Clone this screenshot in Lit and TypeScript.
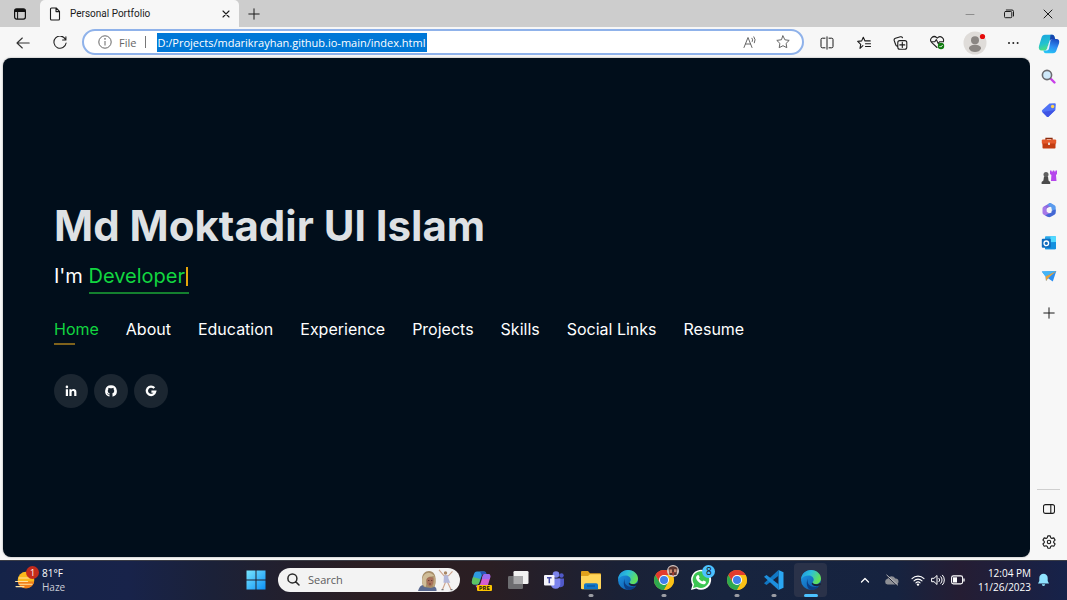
import { LitElement, html, css, svg, type TemplateResult, type SVGTemplateResult } from "lit";
import { customElement, property } from "lit/decorators.js";

const glyph = (w: number, h: number, body: SVGTemplateResult): TemplateResult =>
  html`<svg width=${w} height=${h} viewBox="0 0 ${w} ${h}" aria-hidden="true">${body}</svg>`;

const line = (w: number, h: number, d: string, width = 1, stroke = "#1b1b1b"): TemplateResult =>
  glyph(w, h, svg`<path d=${d} fill="none" stroke=${stroke} stroke-width=${width} stroke-linecap="round" stroke-linejoin="round"/>`);

const icons = {
  tabMenu: glyph(12, 12, svg`<rect x=".6" y=".9" width="10.8" height="10.2" rx="2" fill="none" stroke="#111" stroke-width="1.2"/><path d="M.6 4V2.9a2 2 0 0 1 2-2h6.8a2 2 0 0 1 2 2V4Z" fill="#111"/><path d="M3.6 4v7" stroke="#111"/>`),
  file: line(12, 14, "M2.5 1h4.7L10.5 4.4v7.6a1 1 0 0 1-1 1h-7a1 1 0 0 1-1-1V2a1 1 0 0 1 1-1ZM7 1v3.6h3.5", 1.1),
  close: line(8, 8, "M1 1l6 6M7 1L1 7", 1.1),
  plus: line(12, 12, "M6 .8v10.4M.8 6h10.4"),
  minimize: line(10, 10, "M1 5.5h8", 1, "#8d8d8d"),
  restore: line(10, 10, "M1.5 2.5h5.3a1 1 0 0 1 1 1v4.2a1 1 0 0 1-1 1H1.500a1 1 0 0 1-1-1V3.500a1 1 0 0 1 1-1ZM2.300 1h5.700a1.500 1.500 0 0 1 1.500 1.500v4.500"),
  winClose: line(10, 10, "M1 1l8 8M9 1L1 9"),
  back: line(14, 12, "M13.2 6H1M6.300 1L1 6l5.300 5", 1.1, "#333"),
  reload: line(14, 14, "M12.400 3.200A6.100 6.100 0 1 0 13.100 7M12.900.8v3.200H9.600", 1.1, "#222"),
  info: glyph(14, 14, svg`<circle cx="7" cy="7" r="6.2" fill="none" stroke="#666"/><path d="M7 6v4.500" stroke="#666"/><circle cx="7" cy="3.900" r=".8" fill="#666"/>`),
  readAloud: line(14, 14, "M1 12.500L5 2.500l4 10M2.400 9h5.200M9 3.200a3 3 0 0 1 .3 3.300M10.900 1.800a5.400 5.400 0 0 1 .5 6", 1, "#666"),
  star: line(14, 14, "M7 .9l1.900 3.900 4.300.6-3.100 3 .7 4.300L7 10.700l-3.800 2 .7-4.300-3.100-3 4.300-.6Z", 1, "#666"),
  split: line(14, 14, "M5 2.200H2.300A1.300 1.300 0 0 0 1 3.500v7a1.300 1.300 0 0 0 1.300 1.300H5M9 2.200h2.700A1.300 1.300 0 0 1 13 3.500v7a1.300 1.300 0 0 1-1.300 1.300H9M7 .8v12.400"),
  favorites: line(14, 14, "M5.900 9.600L3 12.300l.7-4L.7 5.400l4-.5 1.600-3.600 1.700 3.600h5.200M8.500 7.700h5M8.500 10.500h5", 1.1),
  collections: line(15, 14, "M4.600 10.500A2.800 2.800 0 0 1 2.500 8.200L1.200 4.500a1.800 1.800 0 0 1 1.200-2.200l5-1.500a1.800 1.800 0 0 1 2.100 1M6.800 4.600h5a2 2 0 0 1 2 2v4.600a2 2 0 0 1-2 2h-5a2 2 0 0 1-2-2V6.600a2 2 0 0 1 2-2ZM9.300 6.400v5M6.800 8.900h5", 1.1),
  health: glyph(15, 15, svg`<path d="M7 12.500L1.800 7.600A3.500 3.500 0 0 1 6.700 2.600l.5.600.6-.6a3.500 3.500 0 0 1 5.500 4M1.800 6.800h3L6.300 4.600l2 4.200 1.200-2h4" fill="none" stroke="#222" stroke-width="1.100" stroke-linecap="round" stroke-linejoin="round"/><circle cx="11" cy="11" r="3.200" fill="#107c10"/><path d="M9.500 11l1.100 1.100 2-2" stroke="#fff" fill="none"/>`),
  avatar: glyph(24, 24, svg`<circle cx="12" cy="12" r="11.500" fill="#dfdcd9"/><circle cx="12" cy="9.300" r="4" fill="#8a8683"/><path d="M6 17.500c0-5 12-5 12 0-1.500 4.700-10.500 4.700-12 0Z" fill="#8a8683"/><circle cx="19.500" cy="5.500" r="2.600" fill="#e60b0b"/>`),
  more: glyph(14, 6, svg`<g fill="#222"><circle cx="4" cy="3" r="1"/><circle cx="8.300" cy="3" r="1"/><circle cx="12.600" cy="3" r="1"/></g>`),
  search: glyph(16, 16, svg`<path d="M9.500 9.500l4 4" stroke="#c83ee8" stroke-width="2.400" stroke-linecap="round"/><circle cx="6" cy="6" r="4.600" fill="#cfe9fa" stroke="#6b6b6f" stroke-width="1.600"/>`),
  shopping: glyph(16, 16, svg`<path d="M8.500 1.500l5-.3a1.200 1.200 0 0 1 1.300 1.300l-.4 5.500-6.700 6.500a1.400 1.400 0 0 1-2 0L1.300 10a1.400 1.400 0 0 1 0-2Z" fill="#4f72f5"/><path d="M1.300 10L14.400 8l-6.700 6.500a1.400 1.400 0 0 1-2 0Z" fill="#3f55e4"/><circle cx="11.600" cy="4.500" r="1.700" fill="#ffd34e"/>`),
  tools: glyph(16, 16, svg`<path d="M5 5V3.300h6V5" fill="none" stroke="#8b2b0d" stroke-width="1.300"/><rect x=".8" y="4.500" width="14.400" height="4.500" rx="1" fill="#e4592b"/><rect x="1.500" y="8.500" width="13" height="5" rx=".8" fill="#c33d12"/><rect x="7" y="7.500" width="2" height="2.400" rx=".5" fill="#e9d9d0"/>`),
  games: glyph(16, 16, svg`<path d="M9 1.500h1.500v1h1.300v-1h1.500v1h1.200v-1H16V5l-1 1 .5 6H10L10.400 6 9 5Z" fill="#b646ec"/><circle cx="5" cy="5.500" r="2.500" fill="#626262"/><path d="M3 7.500h4l.5 4 1.700 1.500v2H.6v-2l1.800-1.500Z" fill="#4c4c4c"/>`),
  office: glyph(16, 16, svg`<path d="M9 .9L3.200 4.200A2.500 2.500 0 0 0 2 6.400v4.200l4-1.300V6.500l4.200-2.600 3.800 2-.3-1.900Z" fill="#8a6be0"/><path d="M7.800 1.500c1-.6 1.900-.6 2.700-.1l3 1.800c.9.500 1.200 1.200 1.200 2.200v4.300l-4.200-2V5.500L6.500 3Z" fill="#5b9cee"/><path d="M1.500 6.400v4.200c0 1 .4 1.700 1.300 2.200l3.500 2 4.200-2.300-4.800-2.700V6l-2-1.800C2 4.800 1.500 5.400 1.500 6.400Z" fill="#a678e8"/><path d="M14.700 7.500v3c0 1-.4 1.700-1.300 2.200l-3.600 2c-1 .6-2 .6-3 .1l-2.600-1.500 6.300-2.800V8.500Z" fill="#4468d4"/><circle cx="8" cy="8" r="2.500" fill="#f7f7f7"/>`),
  outlook: glyph(16, 16, svg`<rect x="4" y="1.200" width="11" height="13" rx="1" fill="#28a8ea"/><path d="M9.500 1.200H14a1 1 0 0 1 1 1V7H9.500Z" fill="#50d9ff"/><path d="M4 8l11-1v6.200a1 1 0 0 1-1 1H4Z" fill="#1490df"/><rect x=".8" y="3.800" width="9" height="9" rx="1" fill="#0f6cbd"/><circle cx="5.300" cy="8.300" r="2.300" fill="none" stroke="#fff" stroke-width="1.300"/>`),
  drop: glyph(16, 16, svg`<path d="M.8 3.500L15.300 3 11.800 13.500 7 10.300 5 13 4.600 8.500Z" fill="#2d8ff0"/><path d="M.8 3.500L15.300 3 4.600 8.500Z" fill="#45b5f5"/><path d="M4.600 8.500L15.300 3 7 10.300 5 13Z" fill="#e8a33a"/>`),
  panel: line(12, 10, "M2.500.6h7a2 2 0 0 1 2 2v4.800a2 2 0 0 1-2 2h-7a2 2 0 0 1-2-2V2.600a2 2 0 0 1 2-2ZM7.800.8v8.400", 1.1),
  gear: line(14, 14, "M5.800.9h2.400l.5 1.800 1.200.7 1.900-.5 1.300 2.200-1.400 1.300v1.300l1.400 1.300-1.300 2.200-1.900-.5-1.200.7-.5 1.800H5.800l-.5-1.800-1.200-.7-1.900.5L.9 9l1.400-1.300V6.400L.9 5.100l1.300-2.200 1.900.5 1.200-.7ZM8.700 7a1.700 1.700 0 1 1-3.400 0 1.700 1.700 0 0 1 3.400 0Z", 1.1),
  copilot: glyph(22, 20, svg`<defs><linearGradient id="a" x1="0" y1="0" x2=".3" y2="1"><stop stop-color="#1aa3e0"/><stop offset=".6" stop-color="#22c2d0"/><stop offset="1" stop-color="#4ee07c"/></linearGradient><linearGradient id="b" x1=".6" y1="0" x2=".3" y2="1"><stop stop-color="#1b4fc4"/><stop offset=".5" stop-color="#2e8cf2"/><stop offset="1" stop-color="#25c7f6"/></linearGradient></defs><path d="M7 .8h7.200c1.500 0 2 1 2.500 2.700L17.200 5h-2.700c-1.800 0-2.600.8-3.100 2.400L9.200 14c-.6 1.800-1.400 2.600-3 2.600H3.600c-2.400 0-3.300-2-2.600-4.600L3.400 4C4.100 1.800 5.200.8 7 .8Z" fill="url(#a)"/><path d="M15 19.200H7.800c-1.500 0-2-1-2.500-2.600h1c1.600 0 2.400-.8 3-2.600l2.100-6.600C11.900 5.800 12.700 5 14.500 5h4c2.400 0 3.200 2 2.500 4.500L18.600 16c-.7 2.200-1.800 3.200-3.600 3.200Z" fill="url(#b)"/><path d="M9.300 14l2.100-6.600c.3-1 .7-1.600 1.300-2L11 14.600c-.4 1.300-1 2-2.200 2H6.200c1.700 0 2.500-.8 3.100-2.600Z" fill="#e9f6fb"/><path d="M12.500.8h1.700c1.500 0 2 1 2.500 2.700L17.200 5h-2.700c-1.200 0-2 .4-2.600 1.200Z" fill="#1745ae"/>`),
  linkedin: glyph(12, 12, svg`<g fill="#fff"><circle cx="1.900" cy="1.900" r="1.300"/><path d="M.8 4.200h2.200V11H.8ZM4.400 4.200h2.100v1c1-1.700 4.900-1.700 4.900 1.800v4H9.200V7.400c0-2-2.600-1.900-2.600 0V11H4.400Z"/></g>`),
  github: glyph(12, 12, svg`<path fill="#fff" fill-rule="evenodd" d="M6 .3a5.800 5.800 0 0 0-1.900 11.300c.3 0 .4-.1.400-.3V9.800C3 10.100 2.600 9.100 2.600 9.100c-.3-.6-.6-.8-.6-.8.6-.1 1.200.7 1.200.7.400.6 1 .5 1.400.3l.3-.8C3.400 8.300 2.800 7.300 2.800 5.800c0-.7.200-1.200.6-1.600-.1-.5-.1-1 .1-1.500.5 0 1 .3 1.500.6a5.500 5.500 0 0 1 2 0c.5-.3 1-.6 1.500-.6.2.5.2 1 .1 1.500.4.400.6 1 .6 1.600 0 1.500-.7 2.500-2.100 2.700.3.300.4.700.4 1.200v1.600c0 .2.100.4.400.3A5.800 5.800 0 0 0 6 .3Z"/>`),
  google: glyph(12, 12, svg`<path d="M9.300 3.100A4.200 4.200 0 1 0 10.200 6.600H6.400" fill="none" stroke="#fff" stroke-width="2.300"/>`),
};

const edge = glyph(22, 22, svg`<defs><linearGradient id="e1" x1="0" y1="0" x2="1" y2=".4"><stop stop-color="#1f8fe0"/><stop offset=".5" stop-color="#2cc0d8"/><stop offset="1" stop-color="#62e05a"/></linearGradient><linearGradient id="e2" x1="0" y1="0" x2="1" y2="1"><stop stop-color="#1e9ae8"/><stop offset="1" stop-color="#0c4fa0"/></linearGradient></defs><circle cx="11" cy="11" r="10" fill="url(#e2)"/><path d="M1 10.500C1.500 4.500 6 1 11 1c6 0 10 4.200 10 8.500 0 3.500-2.500 5.500-5.200 5.500-2 0-3.300-.8-3.300-1.600 0-.7 1.200-1 1.200-2.900 0-2.200-2.200-4-5.200-4-3.200 0-6 1.500-7.500 4Z" fill="url(#e1)"/><path d="M8 9.500c-1.500 4 1 8.800 7.500 8.500 1.500 0 3-.4 4-1.200A10 10 0 0 1 11 21C7 20 5.500 14 8 9.500Z" fill="#0b3f86"/><path d="M12.500 13.400c0 1.400 4.500 3 7.800.300l.8 1.500c-1 1.300-3.500 2.300-6.100 1.800-3-.6-4-3-2.500-3.600Z" fill="#1a2238"/>`);

const chromeBody = svg`<circle cx="11" cy="11" r="10" fill="#fbc116"/><path d="M2.340 6A10 10 0 0 1 19.660 6H11L6.670 13.500Z" fill="#e33b2e"/><path d="M2.340 6A10 10 0 0 0 11 21L15.330 13.500H6.670Z" fill="#2da94f"/><path d="M19.660 6A10 10 0 0 1 11 21L15.330 13.500 11 6Z" fill="#fbc116"/><circle cx="11" cy="11" r="5" fill="#fff"/><circle cx="11" cy="11" r="4" fill="#3f7fea"/>`;

const apps: { name: string; art: TemplateResult; running?: boolean; active?: boolean; badge?: string }[] = [
  { name: "Copilot", art: html`${glyph(22, 20, svg`<path d="M7 1.500h7c1.500 0 2 .7 2.400 2.300h-2c-1.700 0-2.300.8-2.800 2.400L9.500 12c-.6 1.800-1.400 2.600-3 2.600H4.200c-2 0-2.800-1.600-2.200-4L3.800 4.500C4.400 2.500 5.300 1.500 7 1.500Z" fill="#2e9be0"/><path d="M2 10.500L3 7l7.300 2-1 3c-.6 1.800-1.200 2.600-2.800 2.600H4.200c-2 0-2.800-1.600-2.200-4.100Z" fill="#5cc264"/><path d="M10 1.500h4c1.500 0 2 .7 2.400 2.300h-2c-1.300 0-2 .5-2.500 1.600Z" fill="#2653b8"/><path d="M14.500 18H8c-1.300 0-2-.8-2.400-2.400h1.800c1.600 0 2.600-.8 3.200-2.600l2-6.600c.5-1.600 1-2.400 2.400-2.400H18c2 0 2.800 1.600 2.100 4L18 15c-.6 2-1.700 3-3.500 3Z" fill="#d55fd0"/><path d="M15 3.900h3c2 0 2.800 1.600 2.100 4L19.500 9h-7.700l.8-2.700C13 4.600 13.500 3.900 15 3.900Z" fill="#9a6cf0"/>`)}<span class="pre">PRE</span>` },
  { name: "Task view", art: glyph(22, 20, svg`<rect x="6.500" y="1" width="15" height="13" rx="1.300" fill="#f2f2f2"/><rect x="1" y="6" width="15" height="13" rx="1.300" fill="#6d6d70"/><path d="M6.500 6H16v8H6.500Z" fill="#a9a9ab"/>`) },
  { name: "Teams", art: glyph(22, 20, svg`<circle cx="13" cy="4.500" r="3.300" fill="#7b83eb"/><circle cx="18.500" cy="5.500" r="2.200" fill="#5059c9"/><path d="M15 8.500h6v5.500a3.300 3.300 0 0 1-5 2.800Z" fill="#5059c9"/><path d="M8 8.500h9.300v6A4.700 4.700 0 0 1 8 15Z" fill="#7b83eb"/><rect x="1" y="5" width="10.500" height="10.500" rx="1" fill="#f4f4fa"/><path d="M4 7.800h4.600M6.300 7.800v5.400" stroke="#444ba8" stroke-width="1.500"/>`) },
  { name: "File Explorer", running: true, art: glyph(22, 20, svg`<path d="M1 2a1 1 0 0 1 1-1h6l2 2.300H20a1 1 0 0 1 1 1V8H1Z" fill="#e0a11c"/><path d="M1 6h7l2-1.700h10a1 1 0 0 1 1 1V18a1.200 1.200 0 0 1-1.200 1.200H2.200A1.200 1.200 0 0 1 1 18Z" fill="#ffd55a"/><path d="M4 19.200V15a1.800 1.800 0 0 1 1.800-1.800h10.400A1.800 1.800 0 0 1 18 15v4.200Z" fill="#1276c8"/><path d="M7 16h8" stroke="#0b559b" stroke-width="1.300"/>`) },
  { name: "Microsoft Edge", art: edge },
  { name: "Chrome profile", running: true, badge: "face", art: glyph(22, 22, chromeBody) },
  { name: "WhatsApp", badge: "8", art: glyph(22, 22, svg`<path d="M1 21l1.500-5.200A10 10 0 1 1 6.300 19.500Z" fill="#fff"/><path d="M3 19l1.100-3.700A8.300 8.300 0 1 1 7 17.900Z" fill="#3cc653"/><path d="M7.500 6.200c.7-.5 1.200-.2 1.500.5l.6 1.500c.1.500-.8 1.100-.7 1.400a6 6 0 0 0 3.300 2.900c.4.100 1-1.200 1.500-1l2 1c.5.300.2 1.600-.5 2.200-1.800 1.500-5-.2-6.800-2-2.200-2.200-3.500-4.700-.9-6.500Z" fill="#fff"/>`) },
  { name: "Google Chrome", running: true, art: glyph(22, 22, chromeBody) },
  { name: "Visual Studio Code", running: true, art: glyph(22, 22, svg`<path d="M15.500 1l5 2.300v15.400l-5 2.300Z" fill="#2aa6f2"/><path d="M15.500 1v5.700L3.500 16 1 14.200Z" fill="#1177c4"/><path d="M15.500 21v-5.700L3.500 6 1 7.800Z" fill="#1d8fdd"/>`) },
  { name: "Microsoft Edge window", active: true, art: edge },
];

@customElement("icon-button")
class IconButton extends LitElement {
  static styles = css`
    :host { display: grid; }
    button { display: grid; place-items: center; border: 0; padding: 0; margin: 0; background: none; width: 100%; height: 100%; }
    svg { display: block; }
  `;
  @property() label = "";
  @property({ attribute: false }) art?: TemplateResult;
  render() {
    return html`<button aria-label=${this.label} title=${this.label}>${this.art}</button>`;
  }
}

const btn = (label: string, art: TemplateResult) => html`<icon-button .label=${label} .art=${art}></icon-button>`;

@customElement("browser-tabs")
class BrowserTabs extends LitElement {
  static styles = css`
    :host { display: flex; height: 27px; background: #cdcdcd; font: 10px/14px Roboto, "Open Sans", sans-serif; color: #1b1b1b; }
    .menu { width: 40px; }
    .tab { display: flex; align-items: center; width: 199px; box-sizing: border-box; padding: 0 3px 0 9px; background: #f7f7f7; border-radius: 5px 5px 0 0; }
    .tab svg { display: block; }
    .title { flex: 1; padding-left: 9px; white-space: nowrap; }
    .close { width: 20px; height: 20px; }
    .add { width: 30px; }
    .space { flex: 1; }
    .win { display: grid; grid-template-columns: repeat(3, 39px); }
  `;
  render() {
    return html`
      <icon-button class="menu" .label=${"Tab actions"} .art=${icons.tabMenu}></icon-button>
      <div class="tab">${icons.file}<span class="title">Personal Portfolio</span>
        <icon-button class="close" .label=${"Close tab"} .art=${icons.close}></icon-button></div>
      <icon-button class="add" .label=${"New tab"} .art=${icons.plus}></icon-button>
      <span class="space"></span>
      <div class="win">${btn("Minimize", icons.minimize)}${btn("Restore", icons.restore)}${btn("Close", icons.winClose)}</div>`;
  }
}

@customElement("browser-toolbar")
class BrowserToolbar extends LitElement {
  static styles = css`
    :host { display: flex; gap: 4px; height: 31px; padding-left: 4px; background: #f7f7f7; font: 11px/19px "Open Sans", "Noto Sans", sans-serif; }
    .nav, .actions { display: grid; grid-auto-flow: column; grid-auto-columns: 37px; }
    .box { flex: 1; display: flex; align-items: center; box-sizing: border-box; margin: 2px 0 3px; border: 2px solid #8fb2ea; border-radius: 13px; background: #fff; padding: 0 3px 0 14px; }
    .box svg { display: block; }
    label { color: #666; padding: 0 9px 0 7px; }
    .bar { width: 1px; height: 12px; background: #777; margin-right: 11px; }
    input { width: 270px; border: 0; padding: 0; margin: 0; height: 19px; background: #0078d7; color: #fff; font: inherit; outline: 0; }
    .space { flex: 1; }
    .inner { width: 33px; }
  `;
  render() {
    return html`
      <div class="nav">${btn("Back", icons.back)}${btn("Refresh", icons.reload)}</div>
      <div class="box">${icons.info}<label for="url">File</label><span class="bar"></span>
        <input id="url" type="text" .value=${"D:/Projects/mdarikrayhan.github.io-main/index.html"}>
        <span class="space"></span>
        <icon-button class="inner" .label=${"Read aloud"} .art=${icons.readAloud}></icon-button>
        <icon-button class="inner" .label=${"Add to favorites"} .art=${icons.star}></icon-button>
      </div>
      <div class="actions">
        ${btn("Split screen", icons.split)}${btn("Favorites", icons.favorites)}${btn("Collections", icons.collections)}
        ${btn("Browser essentials", icons.health)}${btn("Profile", icons.avatar)}${btn("Settings and more", icons.more)}
      </div>`;
  }
}

@customElement("edge-sidebar")
class EdgeSidebar extends LitElement {
  static styles = css`
    :host { display: flex; flex-direction: column; padding-bottom: 2px; background: #f7f7f7; }
    .apps { display: grid; grid-template-rows: repeat(8, 1fr); height: 266px; }
    .row { height: 33px; flex: none; }
    .add { margin-top: 3px; }
    .space { flex: 1; }
    .rule { border: 0; height: 1px; background: #cfcfcf; margin: 0 7px 2px; width: 23px; }
  `;
  render() {
    return html`
      <div class="apps">
        ${btn("Copilot", icons.copilot)}${btn("Search", icons.search)}${btn("Shopping", icons.shopping)}${btn("Tools", icons.tools)}
        ${btn("Games", icons.games)}${btn("Microsoft 365", icons.office)}${btn("Outlook", icons.outlook)}${btn("Drop", icons.drop)}
      </div>
      <icon-button class="row add" .label=${"Customize"} .art=${icons.plus}></icon-button>
      <span class="space"></span>
      <hr class="rule">
      <icon-button class="row" .label=${"Hide sidebar"} .art=${icons.panel}></icon-button>
      <icon-button class="row" .label=${"Settings"} .art=${icons.gear}></icon-button>`;
  }
}

@customElement("portfolio-page")
class PortfolioPage extends LitElement {
  static styles = css`
    :host { display: flex; flex-direction: column; justify-content: center; align-items: flex-start; padding: 0 51px 5px; background: #010e1b; border-radius: 8px; color: #fff; font-family: Inter, "Open Sans", sans-serif; }
    h1 { margin: 0; font-size: 42px; line-height: 48px; font-weight: 700; color: #dee1e4; }
    h2 { margin: 10px 0 0; font-size: 20px; line-height: 30px; font-weight: 400; }
    .typed { display: inline-block; color: #12d640; border-bottom: 2px solid #14802f; line-height: 32px; }
    .caret { display: inline-block; width: 2px; height: 19px; background: #e5a50a; vertical-align: -3px; margin: 0 1px; }
    nav { display: flex; flex-wrap: wrap; gap: 27px; margin-top: 23px; }
    a { color: #fff; text-decoration: none; }
    nav a { font-size: 16px; line-height: 24px; }
    nav a.current { color: #12d640; }
    nav a.current::after { content: ""; display: block; width: 21px; height: 2px; margin-top: 2px; background: #7f621c; }
    .social { display: flex; gap: 6px; margin-top: 29px; }
    .social a { display: grid; place-items: center; width: 34px; height: 34px; border-radius: 50%; background: #1b2631; }
    svg { display: block; }
  `;
  render() {
    const links = ["Home", "About", "Education", "Experience", "Projects", "Skills", "Social Links", "Resume"];
    return html`
      <h1>Md Moktadir Ul Islam</h1>
      <h2>I'm <span class="typed">Developer<span class="caret"></span></span></h2>
      <nav>${links.map((l, i) => html`<a class=${i ? "" : "current"} href="#${l.toLowerCase().replace(" ", "-")}">${l}</a>`)}</nav>
      <div class="social">
        <a href="#linkedin" aria-label="LinkedIn">${icons.linkedin}</a>
        <a href="#github" aria-label="GitHub">${icons.github}</a>
        <a href="#google" aria-label="Google">${icons.google}</a>
      </div>`;
  }
}

@customElement("task-bar")
class TaskBar extends LitElement {
  static styles = css`
    :host { display: grid; grid-template-columns: 1fr auto 1fr; align-items: center; height: 40px; box-sizing: border-box; padding-bottom: 2px; border-top: 1px solid #3b3d46; color: #fff; font: 10px/14px "Open Sans", "Noto Sans", sans-serif;
      background: linear-gradient(90deg, #152348 0%, #18234a 12%, #1b2138 20%, #2b1e22 34%, #2a1e23 46%, #1a2136 58%, #17243e 68%, #162340 84%, #251d33 90%, #16224a 100%); }
    button { border: 0; padding: 0; margin: 0; background: none; color: inherit; font: inherit; }
    svg { display: block; }
    .weather { display: flex; align-items: center; gap: 4px; padding-left: 15px; text-align: left; justify-self: start; }
    .weather span { display: block; }
    .weather .haze { color: #c9ccd6; }
    .weather .sun { position: relative; width: 23px; height: 28px; display: grid; align-items: center; }
    .weather .count { position: absolute; right: -1px; top: 0; width: 13px; height: 13px; border-radius: 50%; background: #c42b1c; font-size: 9px; line-height: 13px; text-align: center; }
    .middle { display: flex; align-items: center; }
    .start { width: 36px; height: 34px; display: grid; place-items: center; }
    .search { display: flex; align-items: center; box-sizing: border-box; width: 182px; height: 24px; margin: 0 3px 0 4px; padding: 0 4px 0 9px; border-radius: 12px; background: #f3f3f3; }
    .search input { flex: 1; min-width: 0; border: 0; outline: 0; background: none; padding: 0 0 0 8px; font: 11px/16px "Open Sans", "Noto Sans", sans-serif; }
    .search input::placeholder { color: #5c5c5c; opacity: 1; }
    .apps { display: grid; grid-template-columns: repeat(10, 1fr); width: 366px; }
    .app { position: relative; display: grid; place-items: center; justify-self: center; width: 33px; height: 34px; border-radius: 4px; }
    .active { background: #2a3249; }
    .mark { position: absolute; bottom: 0; left: 50%; transform: translateX(-50%); width: 5px; height: 3px; border-radius: 2px; background: #9a9ca3; }
    .active .mark { width: 14px; background: #4cc2ff; }
    .badge { position: absolute; right: 2px; top: 2px; width: 13px; height: 13px; border-radius: 50%; background: #4cc2ff; color: #111; font-size: 10px; line-height: 13px; text-align: center; }
    .face { position: absolute; right: 2px; top: 2px; }
    .pre { position: absolute; right: 6px; bottom: 6px; padding: 0 2px; background: #fdc500; color: #111; border-radius: 1px; font: 700 6px/6px "Open Sans", sans-serif; }
    .tray { display: flex; align-items: center; justify-self: end; padding-right: 17px; }
    .chev { margin-right: 14px; }
    .cloud { margin-right: 12px; }
    .status { display: flex; align-items: center; gap: 6px; margin-right: 13px; }
    .clock { text-align: right; margin-right: 6px; }
    .clock time { display: block; }
  `;
  render() {
    return html`
      <button class="weather">
        <span class="sun">${glyph(20, 20, svg`<circle cx="11" cy="10" r="8.300" fill="#f9b81c"/><path d="M2.800 11.500h16.400c-.7 4-4.100 6.800-8.200 6.800s-7.500-2.800-8.200-6.800Z" fill="#f0801a"/><path d="M4 8h10M.6 11.500h12M4 14.300h13M1 16.600h8" stroke="#ffe2a0" stroke-width="1.100" stroke-linecap="round"/>`)}<span class="count">1</span></span>
        <span><span>81°F</span><span class="haze">Haze</span></span>
      </button>
      <div class="middle">
        <button class="start" aria-label="Start">${glyph(20, 20, svg`<defs><linearGradient id="w" x1="0" y1="0" x2="20" y2="20" gradientUnits="userSpaceOnUse"><stop stop-color="#7be8ff"/><stop offset="1" stop-color="#0a8ef5"/></linearGradient></defs><path d="M.5.5h9v9h-9ZM10.500.5h9v9h-9ZM.5 10.500h9v9h-9ZM10.500 10.500h9v9h-9Z" fill="url(#w)"/>`)}</button>
        <label class="search">${line(13, 13, "M8.600 8.600L12 12M9.900 5.400a4.500 4.500 0 1 1-9 0 4.500 4.500 0 0 1 9 0Z", 1.5, "#2a2a2a")}
          <input type="search" placeholder="Search" aria-label="Search">
          ${glyph(38, 22, svg`<path d="M0 22c1-4 3-6 5-6l9 1c3 0 5 2 4.500 5Z" fill="#5b6a90"/><path d="M4 10C4 5 7 2 11 2c4.500 0 7 4 6.500 9 0 3 0 5.500-1.500 7l-3 1-7-1c-2-1.500-2-5-2-8Z" fill="#a68d69"/><path d="M8.500 9.500c2-2 4.500-2 7-.5.3 4-.5 7.500-3.500 8.500-2.500-.5-4-4-3.500-8Z" fill="#a8705a"/><path d="M4.500 9C6 4 11 1 16.500 7c-2 .5-6 0-8 3-.8 2 .5 6-1 8C4.500 17 3.500 12 4.500 9Z" fill="#d0bd98"/><path d="M16.500 7c1.500 3 1.500 8-.5 11l-1.200-1c1-3 1.200-6 .7-9Z" fill="#bda47c"/><path d="M10 11.500h1.400M13 11.500h1.300M11 15h2" stroke="#5b322c" stroke-width=".8"/><circle cx="27.500" cy="4" r="1.700" fill="#a98663"/><path d="M21 .8l5 6h4.500l4-4.500M28 12l-3.500 8.500M29 12l4 8.500" stroke="#cda38c" stroke-width="1.100" fill="none"/><path d="M26 6.300h4l.5 3.500 1.800 4h-6.800Z" fill="#b3b8da"/><path d="M23.500 20.700h2M32.500 20.700h2" stroke="#777" stroke-width="1.200"/>`)}
        </label>
        <div class="apps">${apps.map((a) => html`<button class="app ${a.active ? "active" : ""}" aria-label=${a.name}>${a.art}
          ${a.badge === "face" ? html`<span class="face">${glyph(12, 12, svg`<circle cx="6" cy="6" r="6" fill="#d8cbc6"/><path d="M1.500 3.500C3.500.5 8.500.5 10.500 3.500L9.500 10h-7Z" fill="#5a3430"/><path d="M2.500 4.500h2.500v3.500H2.500ZM7 4.200h2.500v3H7Z" fill="#c98c72"/><path d="M5.300 7h1.700v3.500H5.300Z" fill="#a33b2e"/>`)}</span>` : a.badge ? html`<span class="badge">${a.badge}</span>` : ""}
          ${a.running || a.active ? html`<span class="mark"></span>` : ""}</button>`)}</div>
      </div>
      <div class="tray">
        <button class="chev" aria-label="Show hidden icons">${line(10, 8, "M1.500 6L5 2.500 8.500 6", 1.3, "#fff")}</button>
        <button class="cloud" aria-label="OneDrive">${glyph(15, 12, svg`<path d="M3.500 10.500a2.900 2.900 0 0 1 0-5.700A4.300 4.300 0 0 1 11.300 4.500a3 3 0 0 1 .4 6Z" fill="#8d8f95"/><path d="M2.500 1.800L13 11.500" stroke="#1d2236" stroke-width="1"/><path d="M2.500.8L14 11.300" stroke="#c9c9cc" stroke-width=".9"/>`)}</button>
        <button class="status" aria-label="Network, sound and battery">
          ${glyph(14, 12, svg`<path d="M1 4.600a8.500 8.500 0 0 1 12 0M3 6.800a5.600 5.600 0 0 1 8 0M4.900 8.900a3 3 0 0 1 4.200 0" fill="none" stroke="#fff" stroke-width="1.100" stroke-linecap="round"/><circle cx="7" cy="10.600" r="1.200" fill="#fff"/>`)}
          ${line(14, 12, "M1 4.300h2L6 1.500v9L3 7.700H1ZM8 4.300a2.400 2.400 0 0 1 0 3.400M9.800 2.700a4.600 4.600 0 0 1 0 6.600M11.500 1.200a6.800 6.800 0 0 1 0 9.600", 1, "#fff")}
          ${glyph(14, 10, svg`<rect x=".6" y=".9" width="11" height="8" rx="1.800" fill="none" stroke="#fff" stroke-width="1.100"/><rect x="2" y="2.300" width="4" height="5.200" fill="#fff"/><path d="M13 3.500v3" stroke="#fff" stroke-width="1.300"/>`)}
        </button>
        <div class="clock"><time>12:04 PM</time><time>11/26/2023</time></div>
        <button aria-label="Notifications">${glyph(13, 14, svg`<path d="M6.500.8a4.200 4.200 0 0 1 4.200 4.200v3l1.300 2.500H1L2.300 8V5A4.200 4.200 0 0 1 6.500.8ZM4.800 11.300h3.400a1.700 1.700 0 0 1-3.400 0Z" fill="#8fe3ff"/>`)}</button>
      </div>`;
  }
}

@customElement("app-root")
class AppRoot extends LitElement {
  static styles = css`
    :host { display: grid; grid-template-rows: auto 1fr auto; min-height: 100vh; background: #f7f7f7; }
    .body { display: grid; grid-template-columns: 1fr 37px; }
    .main { display: flex; flex-direction: column; min-width: 0; }
    .page { flex: 1; margin: 0 0 3px 3px; box-shadow: 0 0 2px #0006; }
  `;
  render() {
    return html`
      <browser-tabs></browser-tabs>
      <div class="body">
        <main class="main"><browser-toolbar></browser-toolbar><portfolio-page class="page"></portfolio-page></main>
        <edge-sidebar></edge-sidebar>
      </div>
      <task-bar></task-bar>`;
  }
}
